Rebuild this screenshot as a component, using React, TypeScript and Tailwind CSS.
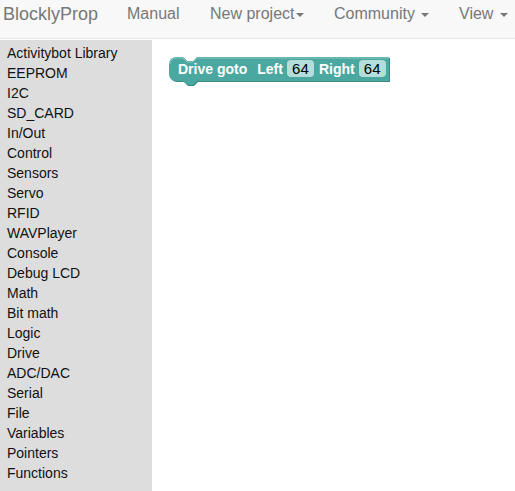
import React from 'react';

const categories = [
  'Activitybot Library',
  'EEPROM',
  'I2C',
  'SD_CARD',
  'In/Out',
  'Control',
  'Sensors',
  'Servo',
  'RFID',
  'WAVPlayer',
  'Console',
  'Debug LCD',
  'Math',
  'Bit math',
  'Logic',
  'Drive',
  'ADC/DAC',
  'Serial',
  'File',
  'Variables',
  'Pointers',
  'Functions',
];

const Caret = () => (
  <span className="inline-block w-0 h-0 ml-[2px] align-middle border-t-[4px] border-t-[#777] border-x-[4px] border-x-transparent" />
);

const Field = ({ value }: { value: string }) => (
  <span className="inline-flex items-center justify-center h-[17px] w-[27px] rounded-[4px] bg-[#b4dedb] text-[15px] font-normal text-black leading-none">
    {value}
  </span>
);

export default function App() {
  return (
    <div
      className="w-[515px] h-[491px] overflow-hidden bg-white flex flex-col"
      style={{ fontFamily: '"Liberation Sans", Arial, sans-serif' }}
    >
      {/* Navbar */}
      <div className="h-[39px] shrink-0 bg-[#f8f8f8] border-b border-[#e7e7e7] flex items-start pt-[4px] text-[#777] text-[16px] leading-[20px]">
        <span className="ml-[3px] text-[18px] w-[124px]">BlocklyProp</span>
        <span className="w-[83px]">Manual</span>
        <span className="w-[124px]">
          New project
          <Caret />
        </span>
        <span className="w-[125px]">
          Community <Caret />
        </span>
        <span>
          View <Caret />
        </span>
      </div>

      <div className="flex flex-1 pt-[1px]">
        {/* Toolbox */}
        <div className="w-[152px] bg-[#dddddd] pt-[3px] pl-[7px]">
          {categories.map((c) => (
            <div key={c} className="h-[20px] leading-[20px] text-[14px] text-[#111]">
              {c}
            </div>
          ))}
        </div>

        {/* Workspace */}
        <div className="flex-1 relative">
          <div className="absolute left-[16px] top-[16px] w-[223px] h-[30px]">
            <svg width="223" height="30" className="absolute inset-0">
              <path
                d="M8 1 H15 L19 5 H25 L29 1 H221 V25 H29 L25 29 H19 L15 25 H8 A7 7 0 0 1 1 18 V8 A7 7 0 0 1 8 1 Z"
                fill="#3a8c86"
                transform="translate(1 1)"
              />
              <path
                d="M8 1 H15 L19 5 H25 L29 1 H221 V25 H29 L25 29 H19 L15 25 H8 A7 7 0 0 1 1 18 V8 A7 7 0 0 1 8 1 Z"
                fill="#4aa8a1"
              />
              <path
                d="M2 8 A6 6 0 0 1 8 2 H15 L19 6 H25 L29 2 H221"
                fill="none"
                stroke="#86c6c1"
                strokeWidth="1"
              />
            </svg>
            <div className="absolute left-[10px] top-[3px] h-[21px] flex items-center text-white text-[14px] font-bold whitespace-nowrap">
              <span>Drive goto</span>
              <span className="ml-[10px]">Left</span>
              <span className="ml-[4px]"><Field value="64" /></span>
              <span className="ml-[5px]">Right</span>
              <span className="ml-[4px]"><Field value="64" /></span>
            </div>
          </div>
        </div>
      </div>
    </div>
  );
}
